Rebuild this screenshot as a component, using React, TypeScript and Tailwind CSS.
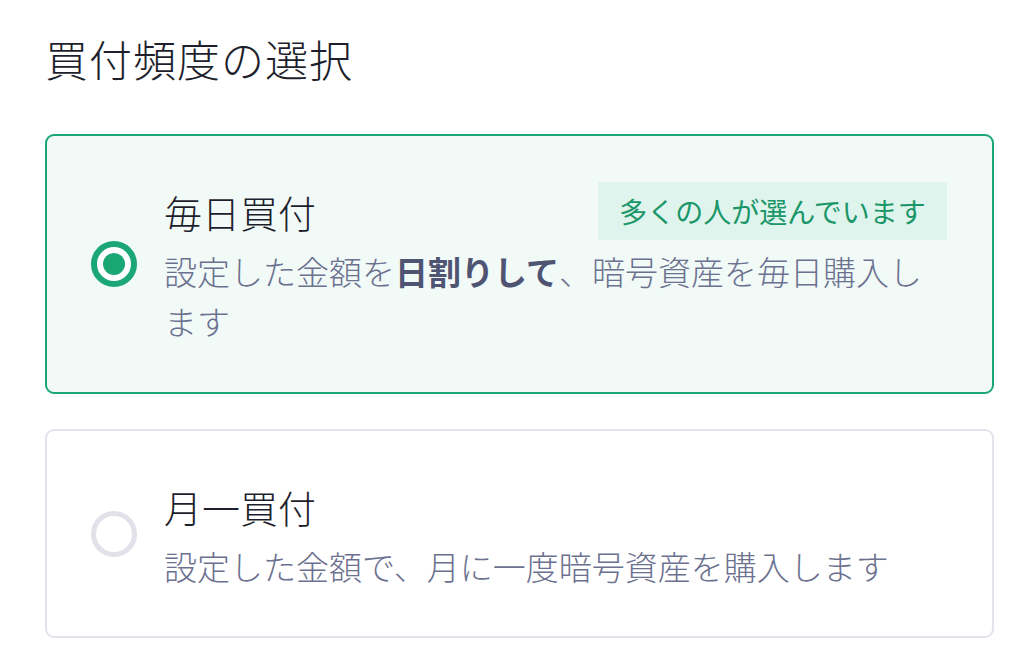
import React, { useState } from 'react';

type Plan = 'daily' | 'monthly';

const Radio: React.FC<{ checked: boolean }> = ({ checked }) =>
    checked ? (
        <div className="w-[46px] h-[46px] shrink-0 rounded-full border-[6px] border-[#1ba676] flex items-center justify-center bg-white">
            <div className="w-[22px] h-[22px] rounded-full bg-[#1ba676]" />
        </div>
    ) : (
        <div className="w-[46px] h-[46px] shrink-0 rounded-full border-[5px] border-[#e0e1e9] bg-white" />
    );

const App: React.FC = () => {
    const [plan, setPlan] = useState<Plan>('daily');

    const cardClass = (active: boolean) =>
        active
            ? 'border-2 border-[#1ba676] bg-[#f1faf7]'
            : 'border-2 border-[#e3e4eb] bg-white';

    return (
        <div
            className="w-[1024px] h-[655px] bg-white px-[45px] pt-[29px] overflow-hidden"
            style={{ fontFamily: '"Noto Sans CJK JP", "Noto Sans", sans-serif' }}
        >
            <h1 className="text-[43px] leading-[59px] font-light text-[#1e1f2c] tracking-[1px] mb-[46px]">買付頻度の選択</h1>

            <div className="flex flex-col gap-[35px] w-[949px]">
                <button
                    onClick={() => setPlan('daily')}
                    className={`${cardClass(plan === 'daily')} rounded-[9px] flex items-center pl-[44px] pr-[45px] py-[46px] text-left`}
                >
                    <Radio checked={plan === 'daily'} />
                    <div className="flex-1 ml-[27px]">
                        <div className="flex items-center justify-between h-[58px]">
                            <span className="text-[38px] font-light text-[#1e1f2c]">毎日買付</span>
                            <span className="h-[58px] w-[349px] flex items-center justify-center bg-[#dff4ec] text-[#1b9669] text-[28px]">
                                多くの人が選んでいます
                            </span>
                        </div>
                        <p className="mt-[6px] text-[33px] leading-[50px] font-light text-[#6c7190] pr-[10px]">
                            設定した金額を<b className="font-bold text-[#4f5473]">日割りして</b>、暗号資産を毎日購入します
                        </p>
                    </div>
                </button>

                <button
                    onClick={() => setPlan('monthly')}
                    className={`${cardClass(plan === 'monthly')} rounded-[9px] flex items-center pl-[44px] pr-[45px] pt-[46px] pb-[45px] text-left`}
                >
                    <Radio checked={plan === 'monthly'} />
                    <div className="flex-1 ml-[27px]">
                        <div className="flex items-center h-[58px]">
                            <span className="text-[38px] font-light text-[#1e1f2c]">月一買付</span>
                        </div>
                        <p className="mt-[6px] text-[33px] leading-[50px] font-light text-[#6c7190]">
                            設定した金額で、月に一度暗号資産を購入します
                        </p>
                    </div>
                </button>
            </div>
        </div>
    );
};

export default App;
